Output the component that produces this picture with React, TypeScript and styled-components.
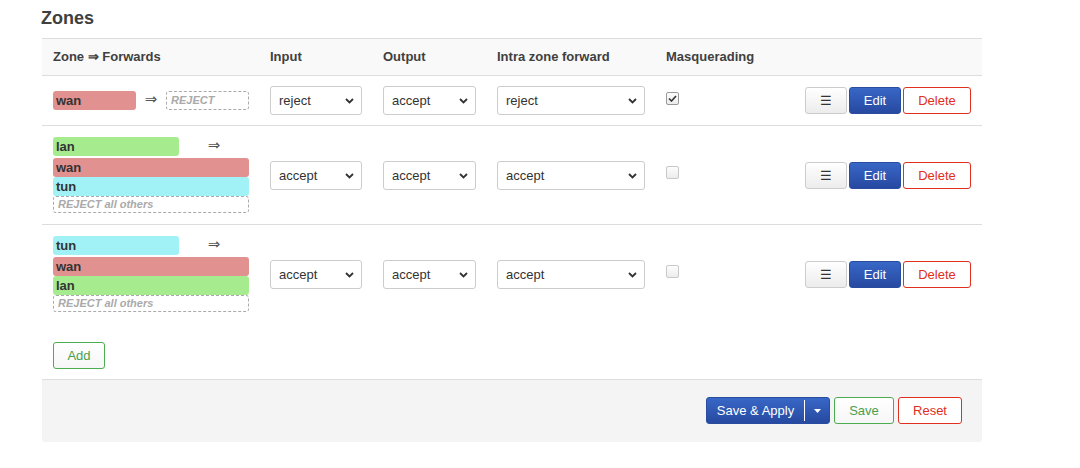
import React from "react";
import styled, { createGlobalStyle } from "styled-components";

const Global = createGlobalStyle`
  html, body { margin: 0; padding: 0; background: #fff; }
  body { font-family: "Liberation Sans", Arial, sans-serif; font-size: 13px; color: #404040; }
`;

const Page = styled.div`
  padding: 8px 0 0 42px;
  width: 940px;
`;

const Title = styled.h3`
  margin: 0 0 10px -1px;
  font-size: 18px;
  line-height: 20px;
  font-weight: bold;
  color: #404040;
`;

const Table = styled.div`
  border-top: 1px solid #ddd;
`;

const Grid = styled.div<{ $head?: boolean; $last?: boolean }>`
  display: grid;
  grid-template-columns: 218px 113px 114px 169px 1fr auto;
  align-items: center;
  background: ${(p) => (p.$head ? "#f9f9f9" : "#fff")};
  border-bottom: ${(p) => (p.$last ? "none" : "1px solid #ddd")};
`;

const HeadCell = styled.div`
  padding: 10px 10px;
  font-weight: bold;
  line-height: 16px;
  color: #404040;
  &:first-child { padding-left: 11px; }
`;

const Cell = styled.div<{ $right?: boolean }>`
  padding: 10px 10px;
  display: flex;
  align-items: center;
  justify-content: ${(p) => (p.$right ? "flex-end" : "flex-start")};
  &:first-child { padding-left: 11px; padding-right: 11px; }
  &:last-child { padding-right: 11px; }
`;

const Forwards = styled.div`
  display: flex;
  flex-wrap: wrap;
  width: 196px;
  align-items: flex-start;
`;

const Side = styled.div<{ $w: number }>`
  width: ${(p) => p.$w}px;
  display: flex;
  flex-direction: column;
  padding: 1px 0;
`;

const Arrow = styled.span<{ $w: number }>`
  width: ${(p) => p.$w}px;
  text-align: center;
  font-family: "DejaVu Sans", sans-serif;
  font-size: 15px;
  line-height: 19px;
  color: #555;
`;

const Badge = styled.span<{ $bg: string }>`
  display: block;
  background: ${(p) => p.$bg};
  border-radius: 3px;
  padding: 0 3px;
  height: 19px;
  line-height: 19px;
  font-weight: bold;
  font-size: 13px;
  color: #333;
`;

const Reject = styled.span<{ $tall?: boolean }>`
  display: block;
  border: 1px dashed #aaa;
  border-radius: 3px;
  padding: 0 4px;
  height: ${(p) => (p.$tall ? 17 : 15)}px;
  line-height: ${(p) => (p.$tall ? 17 : 15)}px;
  font-style: italic;
  font-weight: bold;
  font-size: 11px;
  color: #aaa;
`;

const SelectWrap = styled.div<{ $w: number }>`
  position: relative;
  width: ${(p) => p.$w}px;
  height: 29px;
`;

const Select = styled.select`
  appearance: none;
  -webkit-appearance: none;
  width: 100%;
  height: 29px;
  box-sizing: border-box;
  border: 1px solid #ccc;
  border-radius: 3px;
  background: #fff;
  padding: 0 20px 0 8px;
  font-family: "Liberation Sans", Arial, sans-serif;
  font-size: 13px;
  color: #333;
  outline: none;
`;

const Chevron = styled.svg`
  position: absolute;
  right: 8px;
  top: 12px;
  pointer-events: none;
`;

const Check = styled.span<{ $on?: boolean }>`
  display: inline-flex;
  align-items: center;
  justify-content: center;
  width: 13px;
  height: 13px;
  box-sizing: border-box;
  border: 1px solid ${(p) => (p.$on ? "#999" : "#c8c8c8")};
  border-radius: 2px;
  background: linear-gradient(#fdfdfd, #ececec);
  margin-top: -5px;
`;

const Actions = styled.div`
  display: flex;
  gap: 2px;
`;

const Btn = styled.button<{ $kind: "neutral" | "primary" | "negative" | "positive"; $w?: number }>`
  box-sizing: border-box;
  height: 27px;
  ${(p) => (p.$w ? `width: ${p.$w}px;` : "")}
  padding: 0 10px;
  border-radius: 3px;
  font-family: "Liberation Sans", Arial, sans-serif;
  font-size: 13px;
  line-height: 25px;
  cursor: pointer;
  ${(p) =>
    p.$kind === "primary"
      ? `background: linear-gradient(#3867c6, #2749a1); border: 1px solid #2a4c9f; color: #fff;`
      : p.$kind === "negative"
      ? `background: #fff; border: 1px solid #e0301e; color: #e0301e;`
      : p.$kind === "positive"
      ? `background: linear-gradient(#fff, #f6f6f6); border: 1px solid #4cad50; color: #4a9f4e;`
      : `background: linear-gradient(#fff, #ececec); border: 1px solid #ccc; color: #333;`}
`;

const AddRow = styled.div`
  padding: 19px 11px 10px;
`;

const Footer = styled.div`
  background: #f4f4f4;
  border-top: 1px solid #ddd;
  border-radius: 0 0 3px 3px;
  padding: 17px 20px 18px;
  display: flex;
  justify-content: flex-end;
  gap: 4px;
`;

const SplitBtn = styled.div`
  display: flex;
  height: 27px;
  box-sizing: border-box;
  border-radius: 3px;
  background: linear-gradient(#3867c6, #2749a1);
  border: 1px solid #2a4c9f;
  color: #fff;
`;

const SplitMain = styled.span`
  width: 97px;
  text-align: center;
  border-right: 1px solid #fff;
  margin: 2px 0;
  line-height: 21px;
`;

const SplitCaret = styled.span`
  width: 24px;
  display: flex;
  align-items: center;
  justify-content: center;
`;

const ChevronIcon = () => (
  <Chevron width="9" height="6" viewBox="0 0 9 6">
    <path d="M1 1 L4.5 4.5 L8 1" fill="none" stroke="#333" strokeWidth="1.8" />
  </Chevron>
);

const Sel = ({ w, value }: { w: number; value: string }) => (
  <SelectWrap $w={w}>
    <Select defaultValue={value}>
      <option value="reject">reject</option>
      <option value="drop">drop</option>
      <option value="accept">accept</option>
    </Select>
    <ChevronIcon />
  </SelectWrap>
);

const colors: Record<string, string> = {
  wan: "#e29191",
  lan: "#a6ec8f",
  tun: "#a1f2f6",
};

type Zone = {
  src: string;
  dest: string[];
  input: string;
  output: string;
  forward: string;
  masq: boolean;
};

const zones: Zone[] = [
  { src: "wan", dest: [], input: "reject", output: "accept", forward: "reject", masq: true },
  { src: "lan", dest: ["wan", "tun"], input: "accept", output: "accept", forward: "accept", masq: false },
  { src: "tun", dest: ["wan", "lan"], input: "accept", output: "accept", forward: "accept", masq: false },
];

export default function App() {
  return (
    <>
      <Global />
      <Page>
        <Title>Zones</Title>
        <Table>
          <Grid $head>
            <HeadCell>Zone ⇒ Forwards</HeadCell>
            <HeadCell>Input</HeadCell>
            <HeadCell>Output</HeadCell>
            <HeadCell>Intra zone forward</HeadCell>
            <HeadCell>Masquerading</HeadCell>
            <HeadCell />
          </Grid>
          {zones.map((z, i) => {
            const simple = z.dest.length === 0;
            return (
              <Grid key={z.src} $last={i === zones.length - 1}>
                <Cell>
                  <Forwards>
                    <Side $w={simple ? 83 : 126}>
                      <Badge $bg={colors[z.src]}>{z.src}</Badge>
                    </Side>
                    <Arrow $w={simple ? 30 : 70}>⇒</Arrow>
                    <Side $w={simple ? 83 : 196}>
                      {z.dest.map((d) => (
                        <Badge key={d} $bg={colors[d]}>
                          {d}
                        </Badge>
                      ))}
                      <Reject $tall={simple}>{simple ? "REJECT" : "REJECT all others"}</Reject>
                    </Side>
                  </Forwards>
                </Cell>
                <Cell>
                  <Sel w={92} value={z.input} />
                </Cell>
                <Cell>
                  <Sel w={93} value={z.output} />
                </Cell>
                <Cell>
                  <Sel w={148} value={z.forward} />
                </Cell>
                <Cell>
                  <Check $on={z.masq}>
                    {z.masq && (
                      <svg width="9" height="7" viewBox="0 0 9 7">
                        <path d="M1 3.5 L3.5 6 L8 1" fill="none" stroke="#333" strokeWidth="1.6" />
                      </svg>
                    )}
                  </Check>
                </Cell>
                <Cell $right>
                  <Actions>
                    <Btn $kind="neutral" $w={42}>☰</Btn>
                    <Btn $kind="primary" $w={52}>Edit</Btn>
                    <Btn $kind="negative" $w={68}>Delete</Btn>
                  </Actions>
                </Cell>
              </Grid>
            );
          })}
        </Table>
        <AddRow>
          <Btn $kind="positive" $w={52}>Add</Btn>
        </AddRow>
        <Footer>
          <SplitBtn>
            <SplitMain>Save &amp; Apply</SplitMain>
            <SplitCaret>
              <svg width="7" height="4" viewBox="0 0 7 4">
                <path d="M0 0 L7 0 L3.5 4 Z" fill="#fff" />
              </svg>
            </SplitCaret>
          </SplitBtn>
          <Btn $kind="positive" $w={60}>Save</Btn>
          <Btn $kind="negative" $w={64}>Reset</Btn>
        </Footer>
      </Page>
    </>
  );
}
